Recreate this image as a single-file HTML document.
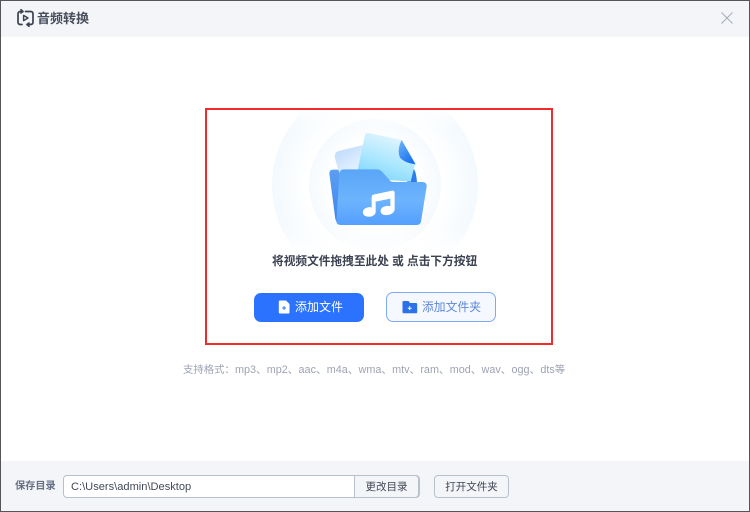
<!DOCTYPE html>
<html lang="zh">
<head>
<meta charset="utf-8">
<title>音频转换</title>
<style>
html,body{margin:0;padding:0}
body{width:750px;height:512px;position:relative;overflow:hidden;background:#fff;font-family:"Liberation Sans","Noto Sans CJK SC",sans-serif}
.abs{position:absolute;white-space:nowrap}
.frame{position:absolute;left:0;top:0;width:748px;height:510px;border:1px solid #555;z-index:10;pointer-events:none}
.head{position:absolute;left:1px;top:1px;width:748px;height:36px;background:#f3f5f8}
.foot{position:absolute;left:1px;top:461px;width:748px;height:50px;background:#f4f5f8}
.red{position:absolute;left:205px;top:108px;width:344px;height:233px;border:2px solid #f32a2a}
.btn{position:absolute;box-sizing:border-box;border-radius:7px}
</style>
</head>
<body>
<div class="head"></div>
<div class="foot"></div>

<svg class="abs" style="left:16px;top:8px" width="20" height="20" viewBox="0 0 20 20" fill="none" stroke="#3b4150" stroke-width="1.7" stroke-linecap="round" stroke-linejoin="round">
<path d="M5.5 3.5H4.5Q2 3.5 2 6V14Q2 16.5 4.5 16.5H6"/>
<path d="M5 1.8L7 3.5L5 5"/>
<path d="M9.5 3.5H14.5Q17 3.5 17 6V14Q17 16.5 14.5 16.5H11"/>
<path d="M13 18.2L11 16.5L13 15"/>
<path d="M7.6 7.4L12 10L7.6 12.6Z" stroke-width="1.4"/>
</svg>
<div class="abs" style="left:37px;top:10px;font-size:13px;line-height:18px;font-weight:700;color:#474d5a">音频转换</div>

<svg class="abs" style="left:721px;top:12px" width="12" height="12" viewBox="0 0 12 12" stroke="#a9afba" stroke-width="1.1" fill="none"><path d="M.5 .5L11.5 11.5M11.5 .5L.5 11.5"/></svg>

<svg class="abs" style="left:265px;top:100px" width="220" height="160" viewBox="0 0 220 160">
<defs>
<radialGradient id="o" cx="110" cy="85" r="103" gradientUnits="userSpaceOnUse"><stop offset="0.66" stop-color="#fff"/><stop offset="1" stop-color="#f3f9fe"/></radialGradient>
<radialGradient id="i" cx="110" cy="85" r="66" gradientUnits="userSpaceOnUse"><stop offset="0.65" stop-color="#fff"/><stop offset="1" stop-color="#f5fafe"/></radialGradient>
<linearGradient id="f" x1="0" y1="0" x2="0" y2="1"><stop offset="0.02" stop-color="#fff"/><stop offset="0.2" stop-color="#fff" stop-opacity="0"/><stop offset="0.78" stop-color="#fff" stop-opacity="0"/><stop offset="0.97" stop-color="#fff"/></linearGradient>
</defs>
<circle cx="110" cy="85" r="103" fill="url(#o)"/>
<circle cx="110" cy="85" r="66" fill="url(#i)"/>
<rect x="0" y="0" width="220" height="160" fill="url(#f)"/>
</svg>

<svg class="abs" style="left:320px;top:125px;filter:blur(.3px)" width="115" height="110" viewBox="0 0 345 330">
<defs>
<linearGradient id="a" x1="0.2" y1="0.1" x2="0.9" y2="0.9"><stop offset="0" stop-color="#c2dcfa"/><stop offset="0.55" stop-color="#dcedff"/><stop offset="1" stop-color="#f0f8ff"/></linearGradient>
<linearGradient id="b" x1="0.7" y1="0" x2="0.3" y2="1"><stop offset="0" stop-color="#e9f7ff"/><stop offset="0.55" stop-color="#aee8fe"/><stop offset="1" stop-color="#7dd6fd"/></linearGradient>
<linearGradient id="c" x1="0" y1="0" x2="0.6" y2="1"><stop offset="0" stop-color="#6db6fb"/><stop offset="1" stop-color="#1a72ef"/></linearGradient>
<linearGradient id="d" x1="0" y1="0" x2="0" y2="1"><stop offset="0" stop-color="#5aa5f7"/><stop offset="0.55" stop-color="#6db4fd"/><stop offset="1" stop-color="#559fff"/></linearGradient>
<linearGradient id="e" x1="0" y1="0" x2="0" y2="1"><stop offset="0" stop-color="#5b9ff2"/><stop offset="1" stop-color="#3f84ee"/></linearGradient>
</defs>
<path d="M28 145Q28 134 40 134H70L60 298Q50 296 46 282Z" fill="url(#e)"/>
<path d="M262 130L283 134Q289 145 291 172H262Z" fill="#2f7cec"/>
<path d="M56 78L130 60Q140 58 150 62L165 150H60Q50 120 44 95Q44 82 56 78Z" fill="url(#a)"/>
<path d="M146 24L245 45Q232 68 238 92Q248 106 285 118L272 170L205 165L112 140L134 34Q136 22 146 24Z" fill="url(#b)"/>
<path d="M245 45L287 118Q254 114 240 98Q230 75 245 45Z" fill="url(#c)"/>
<path d="M72 133H170Q180 133 186 140L210 167Q214 171 222 171H308Q321 172 320 184L303 290Q301 300 290 300H62Q50 300 49 290L58 146Q59 133 72 133Z" fill="url(#d)"/>
<path d="M160 209L216 197Q224 196 224 204V252C224 264 209 272 194 270C178 268 178 250 192 245C199 242 206 242 211 244V221L167 230V260C167 272 152 278 139 274C124 270 126 252 141 248C146 246 151 246 155 248V218Q155 210 160 209Z" fill="#fff"/>
</svg>

<div class="red"></div>

<div class="abs" style="left:272px;top:253px;font-size:11.7px;line-height:18px;font-weight:700;color:#3b4150">将视频文件拖拽至此处 或 点击下方按钮</div>

<div class="btn" style="left:254px;top:293px;width:110px;height:29px;background:#2b72ff"></div>
<svg class="abs" style="left:278px;top:300px" width="12" height="14" viewBox="0 0 12 14"><path d="M2 0.5H8L11.5 4V12.5Q11.5 13.5 10.5 13.5H2Q0.8 13.5 0.8 12.5V1.5Q0.8 .5 2 .5Z" fill="#fff"/><path d="M4.2 8H8M6.1 6.1V9.9" stroke="#2b72ff" stroke-width="1"/></svg>
<div class="abs" style="left:295px;top:299px;font-size:12px;line-height:17px;color:#fff">添加文件</div>

<div class="btn" style="left:386px;top:292px;width:110px;height:30px;background:#f5f8ff;border:1px solid #7fa8f6"></div>
<svg class="abs" style="left:402px;top:300px" width="16" height="14" viewBox="0 0 16 14"><path d="M1.5 1H6.5L8 3H14Q15.2 3 15.2 4.2V12Q15.2 13.3 14 13.3H1.5Q.5 13.3 .5 12V2Q.5 1 1.5 1Z" fill="#2b72e8"/><path d="M5.8 8.2H9.6M7.7 6.3V10.1" stroke="#fff" stroke-width="1"/></svg>
<div class="abs" style="left:422px;top:299px;font-size:11.8px;line-height:17px;color:#5c87d8">添加文件夹</div>

<div class="abs" style="left:183px;top:362px;font-size:10.4px;line-height:16px;color:#9ea3b3">支持格式：<span style="font-size:10.8px">mp3、mp2、aac、m4a、wma、mtv、ram、mod、wav、ogg、dts</span>等</div>

<div class="abs" style="left:15px;top:480px;font-size:10.2px;line-height:14px;font-weight:700;color:#667085">保存目录</div>
<div class="btn" style="left:63px;top:475px;width:357px;height:23px;background:#fff;border:1px solid #b9c0cd;border-radius:4px"></div>
<div class="abs" style="left:71px;top:480px;font-size:11.1px;line-height:15px;color:#444a58">C:\Users\admin\Desktop</div>
<div class="btn" style="left:354px;top:475px;width:65px;height:23px;background:#f4f5f8;border:1px solid #b9c0cd;border-radius:0 4px 4px 0"></div>
<div class="abs" style="left:354px;top:480px;width:65px;text-align:center;font-size:10.5px;line-height:15px;color:#3f4553">更改目录</div>
<div class="btn" style="left:434px;top:475px;width:75px;height:23px;background:#f4f5f8;border:1px solid #b9c0cd;border-radius:4px"></div>
<div class="abs" style="left:434px;top:480px;width:75px;text-align:center;font-size:10.5px;line-height:15px;color:#3f4553">打开文件夹</div>

<div class="frame"></div>
</body>
</html>
